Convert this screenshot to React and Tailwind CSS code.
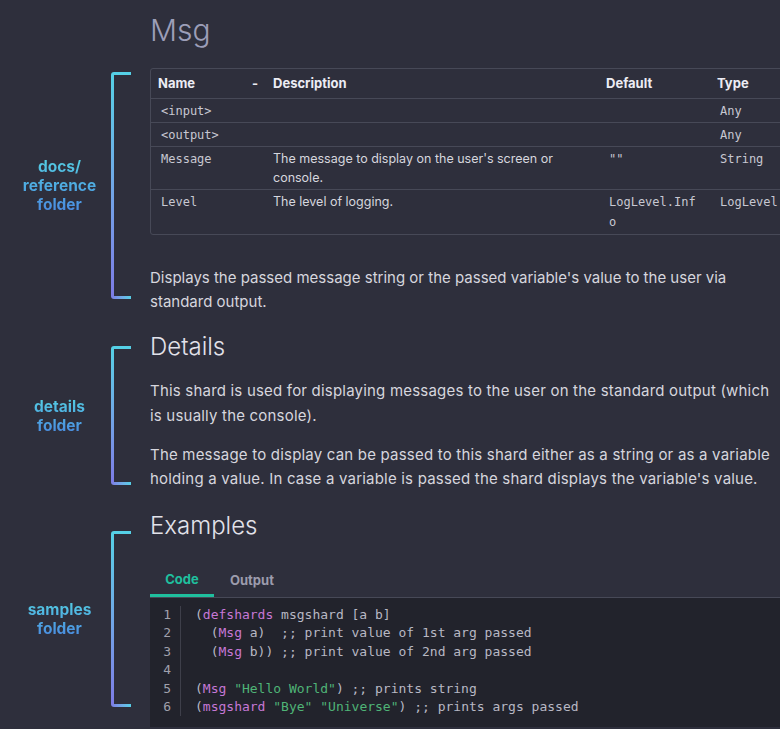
const sans = { fontFamily: "Inter, 'Noto Sans', sans-serif" };

function Bracket() {
  return (
    <div className="flex w-[20px] flex-col self-stretch">
      <div className="h-[3px] w-full rounded-tl-[4px] bg-[#55d0e6]" />
      <div className="w-[3px] flex-1 bg-gradient-to-b from-[#55d0e6] to-[#7d7ce6]" />
      <div className="h-[3px] w-full rounded-bl-[4px] bg-gradient-to-r from-[#7d7ce6] to-[#55d0e6]" />
    </div>
  );
}

function Note({ lines, className }) {
  return (
    <div className={`flex ${className}`}>
      <div className="flex flex-1 items-center justify-center pl-[8px]">
        <div className="bg-gradient-to-b from-[#55cfe2] to-[#4a88e0] bg-clip-text text-center text-[15.5px] font-bold leading-[19px] text-transparent">
          {lines.map((l) => (
            <div key={l}>{l}</div>
          ))}
        </div>
      </div>
      <Bracket />
    </div>
  );
}

const rows = [
  { name: "<input>", desc: "", def: "", type: "Any", h: "h-[24px]" },
  { name: "<output>", desc: "", def: "", type: "Any", h: "h-[24px]" },
  {
    name: "Message",
    desc: ["The message to display on the user's screen or", "console."],
    def: ['""'],
    type: "String",
    h: "h-[43px]",
  },
  {
    name: "Level",
    desc: ["The level of logging."],
    def: ["LogLevel.Inf", "o"],
    type: "LogLevel",
    h: "h-[45px]",
  },
];

const mono = { fontFamily: "'DejaVu Sans Mono', 'Liberation Mono', monospace" };

function Code() {
  const p = "text-[#c678d6]";
  const s = "text-[#4fb477]";
  const lines = [
    <>(<span className={p}>defshards</span> msgshard [a b]</>,
    <>  (<span className={p}>Msg</span> a)  ;; print value of 1st arg passed</>,
    <>  (<span className={p}>Msg</span> b)) ;; print value of 2nd arg passed</>,
    <> </>,
    <>(<span className={p}>Msg</span> <span className={s}>"Hello World"</span>) ;; prints string</>,
    <>(<span className={p}>msgshard</span> <span className={s}>"Bye"</span> <span className={s}>"Universe"</span>) ;; prints args passed</>,
  ];
  return (
    <div className="flex bg-[#22232c] pt-[8px] pb-[11px] text-[13px] leading-[18.4px] text-[#b8b8c4]" style={mono}>
      <div className="w-[31px] border-r border-[#3e3f4a] pr-[9px] text-right text-[#a0a0ac]">
        {lines.map((_, i) => (
          <div key={i}>{i + 1}</div>
        ))}
      </div>
      <div className="pl-[14px] whitespace-pre">
        {lines.map((l, i) => (
          <div key={i}>{l}</div>
        ))}
      </div>
    </div>
  );
}

export default function App() {
  return (
    <div className="flex h-[729px] w-[780px] overflow-hidden bg-[#2e2f3c] text-[#d6d6de]" style={sans}>
      <div className="flex w-[131px] shrink-0 flex-col">
        <Note lines={["docs/", "reference", "folder"]} className="mt-[72px] h-[227px]" />
        <Note lines={["details", "folder"]} className="mt-[47px] h-[139px]" />
        <Note lines={["samples", "folder"]} className="mt-[46px] h-[176px]" />
      </div>

      <div className="ml-[19px] w-[650px] shrink-0">
        <h1 className="mt-[12px] h-[36px] text-[30px] font-light leading-[36px] text-[#9c9eb8]">Msg</h1>

        <div className="mt-[20px] w-[650px] overflow-hidden rounded-[3px] border border-[#474957]">
          <div className="flex h-[29px] items-center text-[13px] font-bold text-[#ececf4]">
            <div className="flex w-[115px] justify-between pl-[7px] pr-[8px]">
              <span>Name</span>
              <span>-</span>
            </div>
            <div className="w-[333px] pl-[7px]">Description</div>
            <div className="w-[112px] pl-[7px]">Default</div>
            <div className="pl-[6px]">Type</div>
          </div>
          {rows.map((r) => (
            <div key={r.name} className={`flex border-t border-[#474957] ${r.h}`}>
              <div className="w-[115px] pl-[10px] pt-[2px] text-[12px] leading-[20px] text-[#c8c8d2]" style={mono}>
                {r.name}
              </div>
              <div className="w-[333px] pl-[7px] pt-[2px] text-[12.5px] leading-[19px]">
                {r.desc &&
                  r.desc.map((d) => (
                    <div key={d}>{d}</div>
                  ))}
              </div>
              <div className="w-[112px] pl-[10px] pt-[2px] text-[12px] leading-[20px] text-[#c8c8d2]" style={mono}>
                {r.def &&
                  r.def.map((d) => (
                    <div key={d}>{d}</div>
                  ))}
              </div>
              <div className="pl-[9px] pt-[2px] text-[12px] leading-[20px] text-[#c8c8d2]" style={mono}>
                {r.type}
              </div>
            </div>
          ))}
        </div>

        <p className="mt-[31px] text-[15px] leading-[24px]">
          Displays the passed message string or the passed variable's value to the user via
          <br />
          standard output.
        </p>

        <h2 className="mt-[17px] h-[32px] text-[24px] font-light leading-[32px] text-[#e2e2ea]">Details</h2>

        <p className="mt-[15px] text-[15px] leading-[25px] whitespace-nowrap tracking-[0.2px]">
          This shard is used for displaying messages to the user on the standard output (which
          <br />
          is usually the console).
        </p>
        <p className="mt-[15px] text-[15px] leading-[24px] whitespace-nowrap tracking-[0.2px]">
          The message to display can be passed to this shard either as a string or as a variable
          <br />
          holding a value. In case a variable is passed the shard displays the variable's value.
        </p>

        <h2 className="mt-[19px] h-[32px] text-[24px] font-light leading-[32px] text-[#e2e2ea]">Examples</h2>

        <div className="mt-[17px] flex h-[39px] border-b border-[#474957] text-[13px] font-bold">
          <div className="flex w-[64px] items-center justify-center border-b-[3px] border-[#1fbf9e] pt-[6px] text-[#1fbf9e]">
            Code
          </div>
          <div className="flex items-center px-[16px] pt-[6px] text-[#9c9cac]">Output</div>
        </div>

        <Code />
      </div>
    </div>
  );
}
